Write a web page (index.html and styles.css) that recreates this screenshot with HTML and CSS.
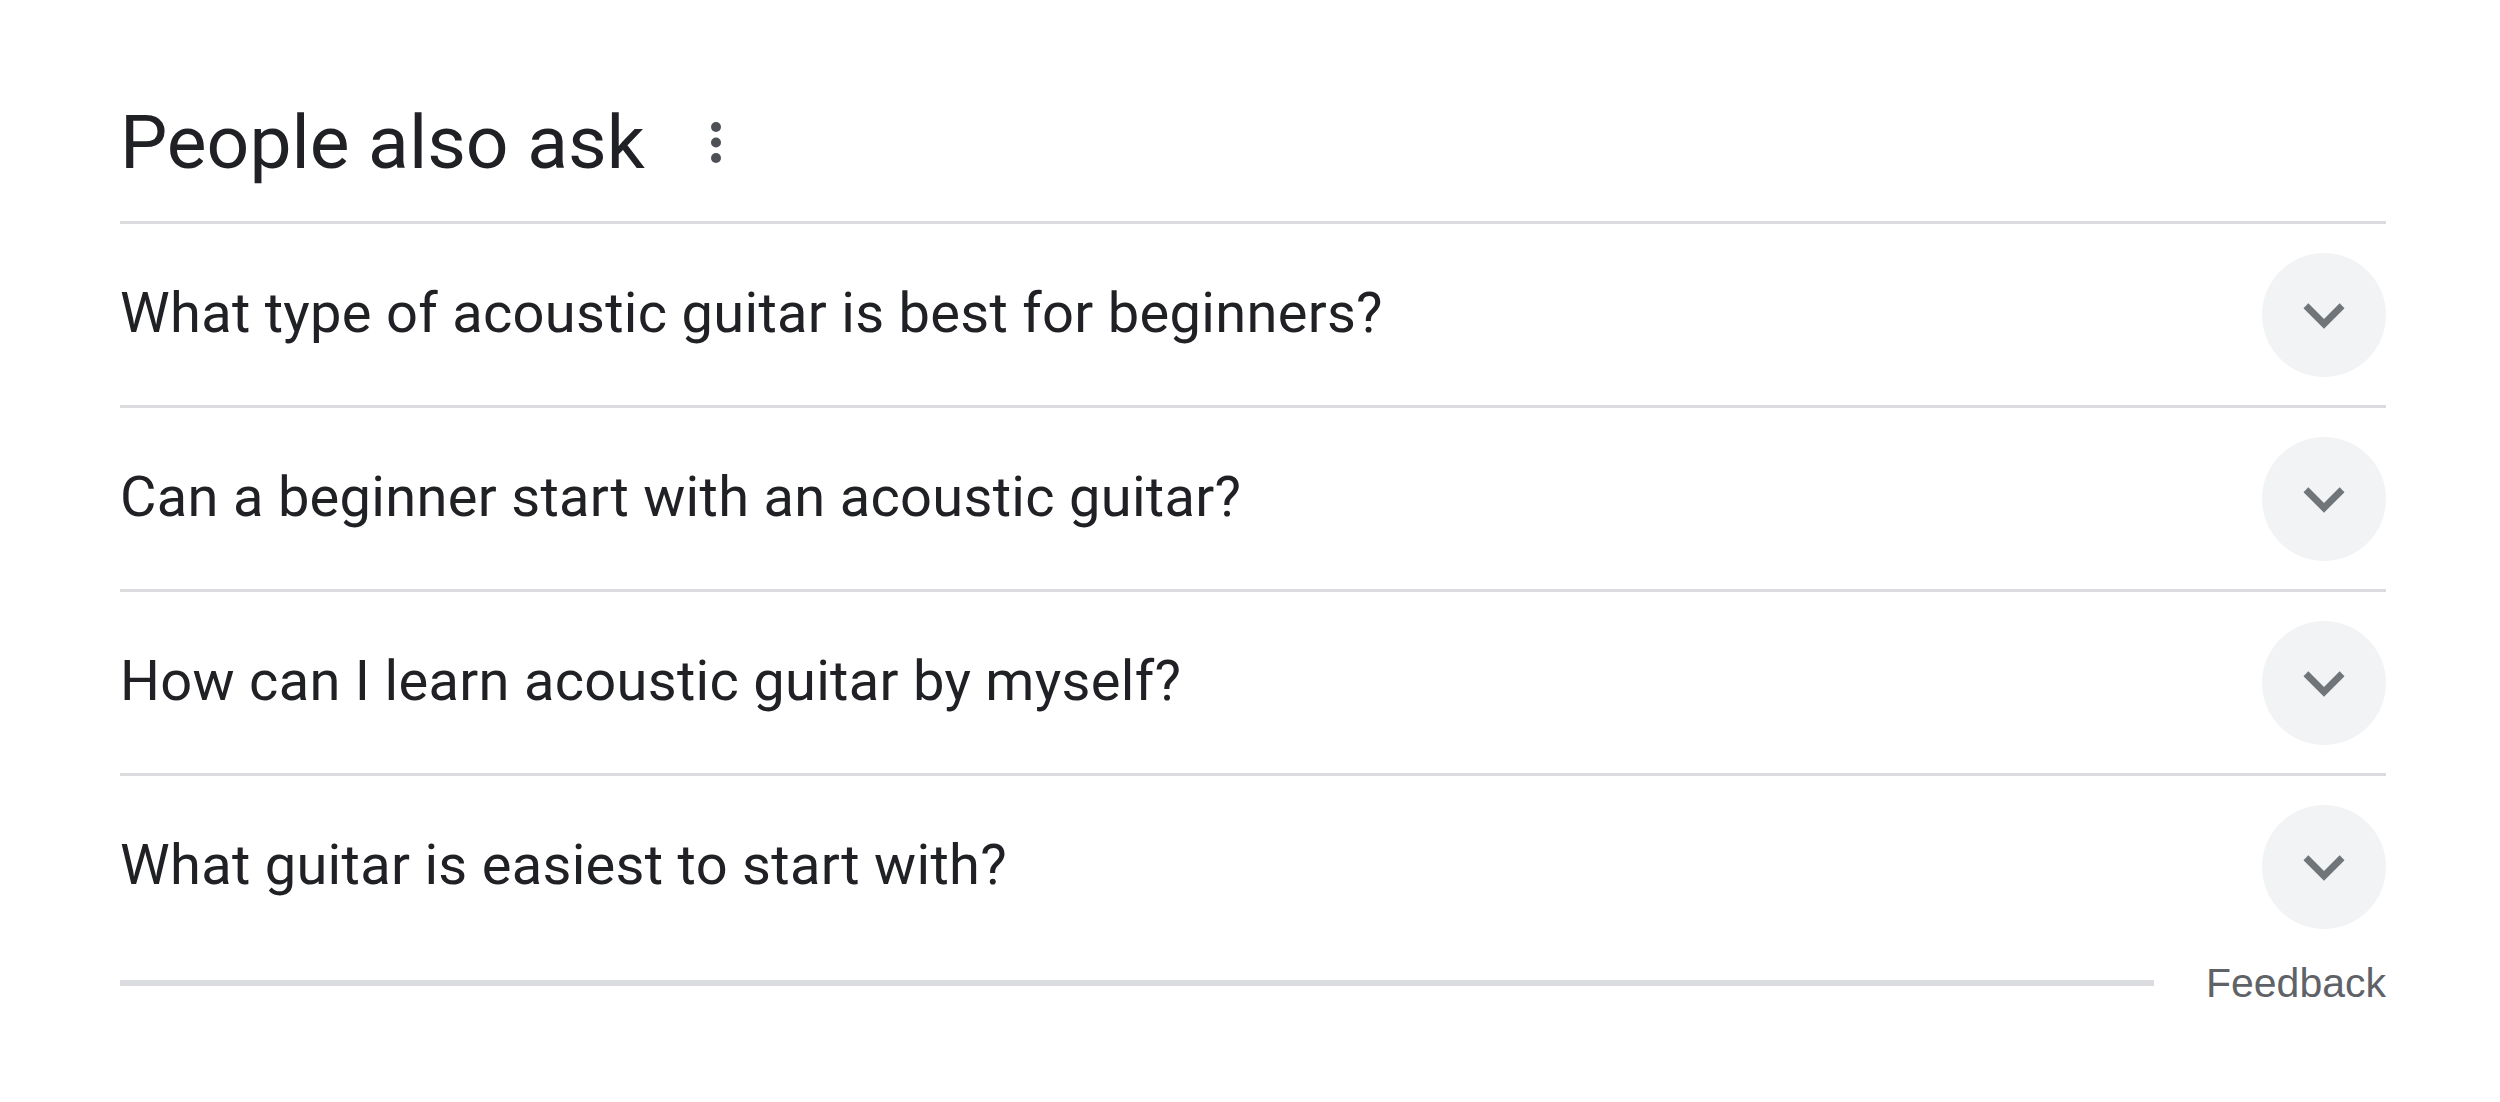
FILE: index.html
```html
<!DOCTYPE html>
<html>
  <head>
    <title>People also ask</title>
    <link rel="stylesheet" href="styles.css">
  </head>
  <body>
    <div class="paa">
      <div class="paa-head">
        <h2 class="paa-title">People also ask</h2>
        <svg class="more" width="10" height="41" viewBox="0 0 10 41">
          <circle cx="5" cy="5" r="5"></circle>
          <circle cx="5" cy="20.5" r="5"></circle>
          <circle cx="5" cy="36" r="5"></circle>
        </svg>
      </div>

      <div class="question">
        <span>What type of acoustic guitar is best for beginners?</span>
        <div class="toggle">
          <svg width="82" height="82" viewBox="0 0 24 24"><path d="M16.59 8.59L12 13.17 7.41 8.59 6 10l6 6 6-6z"></path></svg>
        </div>
      </div>
      <div class="question">
        <span>Can a beginner start with an acoustic guitar?</span>
        <div class="toggle">
          <svg width="82" height="82" viewBox="0 0 24 24"><path d="M16.59 8.59L12 13.17 7.41 8.59 6 10l6 6 6-6z"></path></svg>
        </div>
      </div>
      <div class="question">
        <span>How can I learn acoustic guitar by myself?</span>
        <div class="toggle">
          <svg width="82" height="82" viewBox="0 0 24 24"><path d="M16.59 8.59L12 13.17 7.41 8.59 6 10l6 6 6-6z"></path></svg>
        </div>
      </div>
      <div class="question last">
        <span>What guitar is easiest to start with?</span>
        <div class="toggle">
          <svg width="82" height="82" viewBox="0 0 24 24"><path d="M16.59 8.59L12 13.17 7.41 8.59 6 10l6 6 6-6z"></path></svg>
        </div>
      </div>

      <div class="paa-foot">
        <div class="foot-line"></div>
        <span class="feedback">Feedback</span>
      </div>
    </div>
  </body>
</html>
```

FILE: styles.css
```css
body {
  margin: 0;
  background: #fff;
  font-family: Roboto, "Noto Sans", sans-serif;
  color: #202124;
}
.paa {
  width: 2266px;
  margin-left: 120px;
}
.paa-head {
  display: flex;
  align-items: center;
  padding-top: 92px;
  padding-bottom: 29px;
  border-bottom: 3px solid #dadce0;
}
.paa-title {
  margin: 0;
  font-size: 75px;
  font-weight: 400;
  line-height: 100px;
}
.more {
  margin-left: 66px;
  fill: #4d5156;
}
.question {
  display: flex;
  align-items: center;
  justify-content: space-between;
  height: 181px;
  border-bottom: 3px solid #dadce0;
  font-size: 56px;
  letter-spacing: 0.3px;
}
.question span {
  padding-bottom: 4px;
}
.question.last {
  border-bottom: none;
}
.toggle {
  width: 124px;
  height: 124px;
  border-radius: 50%;
  background: #f1f3f4;
  display: flex;
  align-items: center;
  justify-content: center;
}
.toggle svg {
  fill: #70757a;
}
.paa-foot {
  display: flex;
  align-items: center;
  height: 52px;
}
.foot-line {
  flex: 1;
  height: 6px;
  background: #dadce0;
  margin-right: 52px;
}
.feedback {
  font-family: "Liberation Sans", Arial, sans-serif;
  font-size: 41px;
  line-height: 52px;
  color: #5f6368;
}
```
